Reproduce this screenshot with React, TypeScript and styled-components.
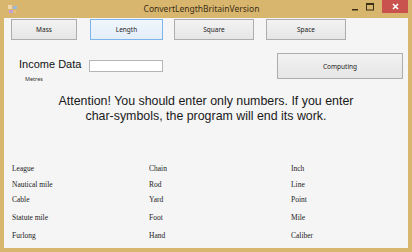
import styled, { createGlobalStyle } from "styled-components";

const GlobalStyle = createGlobalStyle`
    html, body {
        margin: 0;
        padding: 0;
        background: #d9b66e;
    }
`;

const Window = styled.div`
    width: 412px;
    height: 252px;
    box-sizing: border-box;
    background: #d9b66e;
    display: flex;
    flex-direction: column;
    padding: 0 4px 4px 4px;
    font-family: "Liberation Sans", Arial, sans-serif;
    overflow: hidden;
`;

const TitleBar = styled.div`
    height: 18px;
    display: flex;
    align-items: flex-start;
`;

const AppIcon = styled.div`
    width: 16px;
    height: 16px;
    display: flex;
    align-items: center;
    justify-content: center;
    margin-top: 1px;
`;

const Title = styled.div`
    flex: 1;
    text-align: center;
    font-family: "Noto Sans", "Liberation Sans", sans-serif;
    font-size: 8.5px;
    line-height: 17px;
    color: #3b2f17;
    padding-left: 36px;
`;

const Controls = styled.div`
    display: flex;
    align-items: flex-start;
    height: 13px;
`;

const CtrlButton = styled.div<{ $close?: boolean }>`
    width: ${(p) => (p.$close ? "26px" : "15px")};
    height: 13px;
    display: flex;
    align-items: center;
    justify-content: center;
    background: ${(p) => (p.$close ? "#c9524f" : "transparent")};
    margin-left: ${(p) => (p.$close ? "5px" : "0")};
`;

const Client = styled.div`
    flex: 1;
    background: #f5f5f5;
    display: flex;
    flex-direction: column;
`;

const TabRow = styled.div`
    display: flex;
    padding: 1px 0 0 7px;
    height: 21px;
`;

const Button = styled.div<{ $w: number; $gap: number; $active?: boolean }>`
    width: ${(p) => p.$w}px;
    margin-left: ${(p) => p.$gap}px;
    box-sizing: border-box;
    display: flex;
    align-items: center;
    justify-content: center;
    font-family: "Noto Sans", "Liberation Sans", sans-serif;
    font-size: 6.5px;
    color: #222;
    border: 1px solid ${(p) => (p.$active ? "#7eb4ea" : "#adadad")};
    background: ${(p) =>
        p.$active
            ? "linear-gradient(#f0f6fc, #e3eefa)"
            : "linear-gradient(#f2f2f2, #e6e6e6)"};
`;

const InputRow = styled.div`
    display: grid;
    grid-template-columns: 70px 80px 1fr 126px;
    padding: 13px 5px 0 15px;
    height: 26px;
`;

const Heading = styled.div`
    display: flex;
    flex-direction: column;
`;

const Label = styled.div`
    font-size: 11px;
    color: #111;
    line-height: 13px;
    margin-top: 5px;
    white-space: nowrap;
`;

const SubLabel = styled.div`
    font-family: "Noto Sans", "Liberation Sans", sans-serif;
    font-size: 5.5px;
    color: #333;
    margin: 4px 0 0 6px;
`;

const TextBox = styled.div`
    width: 74px;
    height: 12px;
    box-sizing: border-box;
    margin-top: 7px;
    border: 1px solid #b5b5b5;
    background: #fff;
`;

const Computing = styled(Button)`
    height: 26px;
    color: #1a1a1a;
`;

const Attention = styled.div`
    margin-top: 15px;
    text-align: center;
    font-size: 12.4px;
    line-height: 15px;
    color: #1a1a1a;
`;

const Units = styled.div`
    margin-top: 36px;
    display: grid;
    grid-template-columns: 137px 142px 1fr;
    grid-template-rows: 16px 16px 14px 22px 14px;
    align-items: center;
    padding-left: 8px;
    font-family: "Liberation Serif", "Times New Roman", serif;
    font-size: 7.5px;
    color: #222;
`;

const tabs = [
    { name: "Mass", w: 66, gap: 0 },
    { name: "Length", w: 73, gap: 13, active: true },
    { name: "Square", w: 80, gap: 11 },
    { name: "Space", w: 80, gap: 12 },
];

const units = [
    ["League", "Chain", "Inch"],
    ["Nautical mile", "Rod", "Line"],
    ["Cable", "Yard", "Point"],
    ["Statute mile", "Foot", "Mile"],
    ["Furlong", "Hand", "Caliber"],
];

export default function App() {
    return (
        <>
            <GlobalStyle />
            <Window>
                <TitleBar>
                    <AppIcon>
                        <svg width="9" height="9" viewBox="0 0 9 9">
                            <rect x="0" y="0" width="4" height="4" fill="#f1d8a8" />
                            <rect x="5" y="1" width="4" height="3" fill="#9bb7d9" />
                            <rect x="1" y="5" width="4" height="3" fill="#c89bd9" />
                            <rect x="5" y="5" width="3" height="3" fill="#e2c27a" />
                        </svg>
                    </AppIcon>
                    <Title>ConvertLengthBritainVersion</Title>
                    <Controls>
                        <CtrlButton>
                            <svg width="8" height="8" viewBox="0 0 8 8">
                                <rect x="1" y="6" width="6" height="1.5" fill="#3b2f17" />
                            </svg>
                        </CtrlButton>
                        <CtrlButton>
                            <svg width="8" height="8" viewBox="0 0 8 8">
                                <rect x="0.5" y="0.5" width="7" height="6.5" fill="none" stroke="#3b2f17" strokeWidth="1" />
                                <rect x="0.5" y="0.5" width="7" height="1.5" fill="#3b2f17" />
                            </svg>
                        </CtrlButton>
                        <CtrlButton $close>
                            <svg width="7" height="7" viewBox="0 0 7 7">
                                <path d="M1 1 L6 6 M6 1 L1 6" stroke="#fff" strokeWidth="1.6" />
                            </svg>
                        </CtrlButton>
                    </Controls>
                </TitleBar>
                <Client>
                    <TabRow>
                        {tabs.map((t) => (
                            <Button key={t.name} $w={t.w} $gap={t.gap} $active={t.active}>
                                {t.name}
                            </Button>
                        ))}
                    </TabRow>
                    <InputRow>
                        <Heading>
                            <Label>Income Data</Label>
                            <SubLabel>Metres</SubLabel>
                        </Heading>
                        <TextBox />
                        <div />
                        <Computing $w={126} $gap={0}>
                            Computing
                        </Computing>
                    </InputRow>
                    <Attention>
                        Attention! You should enter only numbers. If you enter
                        <br />
                        char-symbols, the program will end its work.
                    </Attention>
                    <Units>
                        {units.map((row) =>
                            row.map((u) => <div key={u}>{u}</div>)
                        )}
                    </Units>
                </Client>
            </Window>
        </>
    );
}
